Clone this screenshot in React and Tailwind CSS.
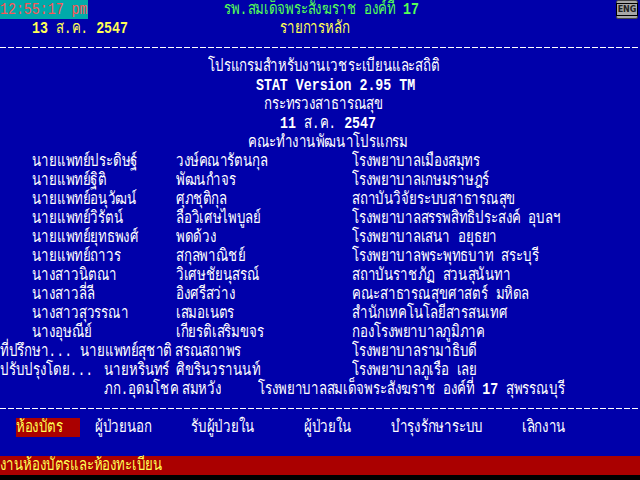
const people = [
  ['นายแพทย์ประดิษฐ์', 'วงษ์คณารัตนกุล', 'โรงพยาบาลเมืองสมุทร'],
  ['นายแพทย์ฐิติ', 'พัฒนกำจร', 'โรงพยาบาลเกษมราษฎร์'],
  ['นายแพทย์อนุวัฒน์', 'ศุภชุติกุล', 'สถาบันวิจัยระบบสาธารณสุข'],
  ['นายแพทย์วิรัตน์', 'ลือวิเศษไพบูลย์', 'โรงพยาบาลสรรพสิทธิประสงค์ อุบลฯ'],
  ['นายแพทย์ยุทธพงศ์', 'พดด้วง', 'โรงพยาบาลเสนา อยุธยา'],
  ['นายแพทย์ถาวร', 'สกุลพาณิชย์', 'โรงพยาบาลพระพุทธบาท สระบุรี'],
  ['นางสาวนิตณา', 'วิเศษชัยนุสรณ์', 'สถาบันราชภัฏ สวนสุนันทา'],
  ['นางสาวลี่ลี', 'อิงศรีสว่าง', 'คณะสาธารณสุขศาสตร์ มหิดล'],
  ['นางสาวสุวรรณา', 'เสมอเนตร', 'สำนักเทคโนโลยีสารสนเทศ'],
  ['นางอุษณีย์', 'เกียรติเสริมขจร', 'กองโรงพยาบาลภูมิภาค'],
]

const menu = [
  ['ผู้ป่วยนอก', 'w-[96px]'],
  ['รับผู้ป่วยใน', 'w-[113px]'],
  ['ผู้ป่วยใน', 'w-[87px]'],
  ['บำรุงรักษาระบบ', 'w-[131px]'],
  ['เลิกงาน', 'w-[80px]'],
]

function Row({ className = '', children }) {
  return <div className={`h-[19px] flex items-center whitespace-nowrap ${className}`}>{children}</div>
}

// text-mode glyphs are tall and narrow: squeeze a 17px font down to the 8px cell
function T({ className = '', children }) {
  return <span className={`inline-block origin-left scale-x-[0.78] ${className}`}>{children}</span>
}

function Cell({ w = '', children }) {
  return (
    <div className={`${w} shrink-0`}>
      <T>{children}</T>
    </div>
  )
}

function Dashes() {
  return (
    <Row>
      <div className="w-full h-[1px] bg-[repeating-linear-gradient(90deg,#ffffff_0px,#ffffff_6px,transparent_6px,transparent_8px)]" />
    </Row>
  )
}

export default function App() {
  return (
    <div className="w-[640px] h-[480px] bg-black overflow-hidden text-white text-[17px] leading-none font-['Liberation_Mono','DejaVu_Sans_Mono',monospace]">
      <div className="bg-[#0000aa]">
        {/* top bar */}
        <Row>
          <div className="w-[88px] h-full bg-[#00aaaa] text-[#ff5555] flex items-center shrink-0">
            <T>12:55:17 pm</T>
          </div>
          <div className="w-[136px] shrink-0" />
          <div className="flex-1 text-[#55ff55]">
            <T>รพ.สมเด็จพระสังฆราช องค์ที่ <b>17</b></T>
          </div>
          <div className="w-[22px] h-[19px] mr-[2px] bg-[#a8a8a8] border border-[#444] rounded-[2px] flex items-center justify-center">
            <span className="border border-black px-[1px] text-[8px] leading-[11px] font-bold text-[#222] font-['DejaVu_Sans',sans-serif]">ENG</span>
          </div>
        </Row>
        <Row className="text-[#ffff55]">
          <div className="w-[32px] shrink-0" />
          <Cell w="w-[248px]"><b>13</b> ส.ค. <b>2547</b></Cell>
          <Cell>รายการหลัก</Cell>
        </Row>
        <Dashes />

        {/* title block */}
        <Row className="pl-[208px]"><T>โปรแกรมสำหรับงานเวชระเบียนและสถิติ</T></Row>
        <Row className="pl-[256px] font-bold"><T>STAT Version 2.95 TM</T></Row>
        <Row className="pl-[264px]"><T>กระทรวงสาธารณสุข</T></Row>
        <Row className="pl-[280px]"><T><b>11</b> ส.ค. <b>2547</b></T></Row>
        <Row className="pl-[248px]"><T>คณะทำงานพัฒนาโปรแกรม</T></Row>

        {/* team list */}
        {people.map(([name, surname, place]) => (
          <Row key={name} className="pl-[32px]">
            <Cell w="w-[144px]">{name}</Cell>
            <Cell w="w-[176px]">{surname}</Cell>
            <Cell>{place}</Cell>
          </Row>
        ))}
        <Row>
          <Cell w="w-[80px]">ที่ปรึกษา...</Cell>
          <Cell w="w-[95px]">นายแพทย์สุชาติ</Cell>
          <Cell w="w-[177px]">สรณสถาพร</Cell>
          <Cell>โรงพยาบาลรามาธิบดี</Cell>
        </Row>
        <Row>
          <Cell w="w-[104px]">ปรับปรุงโดย...</Cell>
          <Cell w="w-[72px]">นายหรินทร์</Cell>
          <Cell w="w-[176px]">ศิขรินวรานนท์</Cell>
          <Cell>โรงพยาบาลภูเรือ เลย</Cell>
        </Row>
        <Row className="pl-[104px]">
          <Cell w="w-[78px]">ภก.อุดมโชค</Cell>
          <Cell w="w-[76px]">สมหวัง</Cell>
          <Cell>โรงพยาบาลสมเด็จพระสังฆราช องค์ที่ <b>17</b> สุพรรณบุรี</Cell>
        </Row>
        <Dashes />

        {/* main menu */}
        <Row className="pl-[16px]">
          <div className="w-[64px] h-full bg-[#aa0000] text-[#ffff55] flex items-center shrink-0">
            <T>ห้องบัตร</T>
          </div>
          <div className="w-[15px] shrink-0" />
          {menu.map(([label, w]) => (
            <Cell key={label} w={w}>{label}</Cell>
          ))}
        </Row>
        <Row />
      </div>

      {/* status line */}
      <Row className="bg-[#aa0000] text-[#ffff55]"><T>งานห้องบัตรและห้องทะเบียน</T></Row>
    </div>
  )
}
